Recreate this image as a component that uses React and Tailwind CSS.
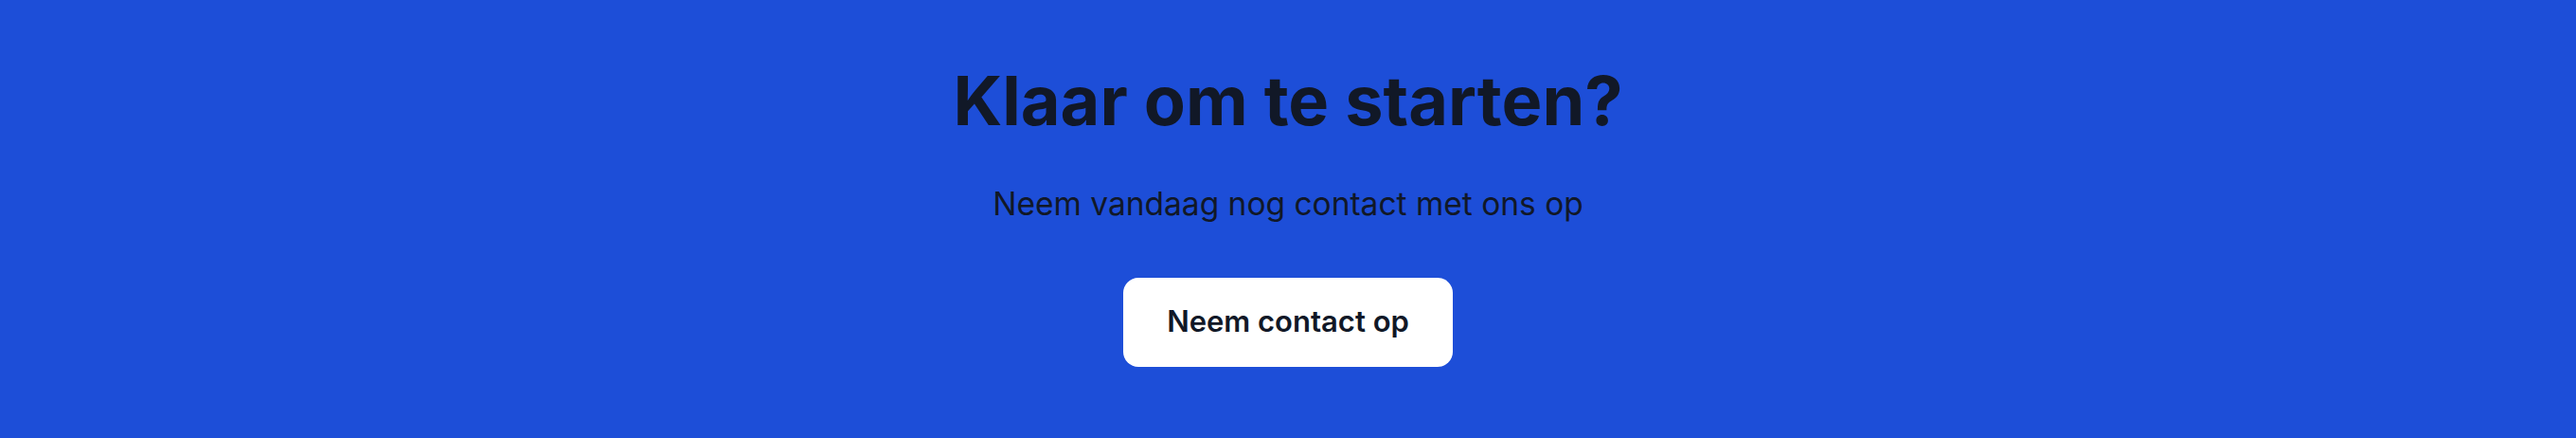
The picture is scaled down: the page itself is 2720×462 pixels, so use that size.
export default function App() {
  return (
    <section
      className="w-full h-[462px] bg-[#1d4ed8] flex flex-col items-center pt-[70px]"
      style={{ fontFamily: "Inter, 'Noto Sans', sans-serif" }}
    >
      <h2 className="text-[72px] leading-none font-bold text-[#111827]">
        Klaar om te starten?
      </h2>
      <p className="mt-[57px] text-[33.5px] leading-none text-[#111827]">
        Neem vandaag nog contact met ons op
      </p>
      <a
        href="#"
        className="mt-[60px] h-[94px] px-[46px] flex items-center bg-white rounded-[16px] text-[31px] font-semibold text-[#111827]"
      >
        Neem contact op
      </a>
    </section>
  );
}
